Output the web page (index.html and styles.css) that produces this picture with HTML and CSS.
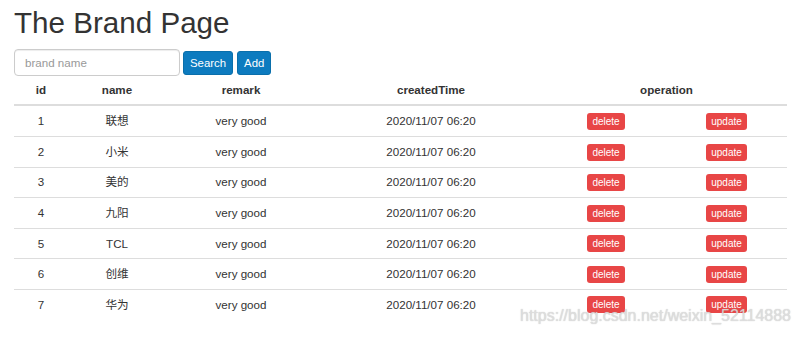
FILE: index.html
```html
<!DOCTYPE html>
<html lang="en">
<head>
    <meta charset="UTF-8">
    <title>Brand</title>
    <link rel="stylesheet" href="styles.css">
</head>
<body>

    <div class="page">
        <h1>The Brand Page</h1>

        <div class="search-bar">
            <input type="text" class="search-input" placeholder="brand name">
            <button class="btn btn-primary">Search</button>
            <button class="btn btn-primary">Add</button>
        </div>

        <table class="brand-table">
            <colgroup>
                <col class="col-id">
                <col class="col-name">
                <col class="col-remark">
                <col class="col-time">
                <col class="col-op">
                <col>
            </colgroup>
            <thead>
                <tr>
                    <th>id</th>
                    <th>name</th>
                    <th>remark</th>
                    <th>createdTime</th>
                    <th colspan="2">operation</th>
                </tr>
            </thead>
            <tbody>
                <tr>
                    <td>1</td>
                    <td>联想</td>
                    <td>very good</td>
                    <td>2020/11/07 06:20</td>
                    <td><button class="btn-xs">delete</button></td>
                    <td><button class="btn-xs">update</button></td>
                </tr>
                <tr>
                    <td>2</td>
                    <td>小米</td>
                    <td>very good</td>
                    <td>2020/11/07 06:20</td>
                    <td><button class="btn-xs">delete</button></td>
                    <td><button class="btn-xs">update</button></td>
                </tr>
                <tr>
                    <td>3</td>
                    <td>美的</td>
                    <td>very good</td>
                    <td>2020/11/07 06:20</td>
                    <td><button class="btn-xs">delete</button></td>
                    <td><button class="btn-xs">update</button></td>
                </tr>
                <tr>
                    <td>4</td>
                    <td>九阳</td>
                    <td>very good</td>
                    <td>2020/11/07 06:20</td>
                    <td><button class="btn-xs">delete</button></td>
                    <td><button class="btn-xs">update</button></td>
                </tr>
                <tr>
                    <td>5</td>
                    <td>TCL</td>
                    <td>very good</td>
                    <td>2020/11/07 06:20</td>
                    <td><button class="btn-xs">delete</button></td>
                    <td><button class="btn-xs">update</button></td>
                </tr>
                <tr>
                    <td>6</td>
                    <td>创维</td>
                    <td>very good</td>
                    <td>2020/11/07 06:20</td>
                    <td><button class="btn-xs">delete</button></td>
                    <td><button class="btn-xs">update</button></td>
                </tr>
                <tr>
                    <td>7</td>
                    <td>华为</td>
                    <td>very good</td>
                    <td>2020/11/07 06:20</td>
                    <td><button class="btn-xs">delete</button></td>
                    <td><button class="btn-xs">update</button></td>
                </tr>
            </tbody>
        </table>
    </div>

    <div class="watermark">https://blog.csdn.net/weixin_52114888</div>

</body>
</html>
```

FILE: styles.css
```css
body {
    font-family: "Liberation Sans", "Noto Sans CJK SC", sans-serif;
    font-size: 11.6px;
    color: #333;
    background-color: #fff;
    margin: 0;
    padding: 0;
}

.page {
    padding: 0 13px 0 14px;
}

h1 {
    font-size: 29.6px;
    font-weight: normal;
    line-height: 33px;
    margin: 6px 0 10px;
    color: #333;
}

.search-bar {
    display: flex;
    align-items: center;
    gap: 3px;
    height: 27px;
}

.search-input {
    width: 166px;
    height: 27px;
    box-sizing: border-box;
    border: 1px solid #ccc;
    border-radius: 4px;
    padding: 0 10px;
    font-family: inherit;
    font-size: 11.6px;
    color: #555;
    box-shadow: inset 0 1px 1px rgba(0, 0, 0, 0.075);
}

.search-input::placeholder {
    color: #999;
}

.btn {
    height: 24px;
    padding: 0 6px;
    border: 1px solid #0a6fab;
    border-radius: 3px;
    font-family: inherit;
    font-size: 11.4px;
    cursor: pointer;
}

.btn-primary {
    background-color: #0d7bbf;
    color: white;
}

.btn-primary + .btn-primary {
    margin-left: 1px;
}

.brand-table {
    width: 100%;
    table-layout: fixed;
    border-collapse: collapse;
    border-spacing: 0;
}

.col-id { width: 54px; }
.col-name { width: 98px; }
.col-remark { width: 150px; }
.col-time { width: 230px; }
.col-op { width: 120px; }

.brand-table th {
    font-weight: bold;
    text-align: center;
    padding: 0;
    height: 28px;
    line-height: 16px;
    border-bottom: 2px solid #ddd;
}

.brand-table td {
    text-align: center;
    vertical-align: middle;
    padding: 0;
    height: 29.6px;
    line-height: 16px;
    border-top: 1px solid #ddd;
}

.brand-table tbody tr:first-child td {
    border-top: none;
    height: 30px;
}

.btn-xs {
    display: inline-block;
    height: 17px;
    padding: 0 5px;
    border: none;
    border-radius: 3px;
    background-color: #e84646;
    color: white;
    font-family: inherit;
    font-size: 10px;
    line-height: 17px;
    vertical-align: middle;
    cursor: pointer;
}

.watermark {
    position: absolute;
    left: 520px;
    top: 307px;
    font-size: 16px;
    color: rgba(225, 225, 225, 0.85);
    text-shadow: 0 0 1px rgba(150, 150, 150, 0.6);
    white-space: nowrap;
}
```
